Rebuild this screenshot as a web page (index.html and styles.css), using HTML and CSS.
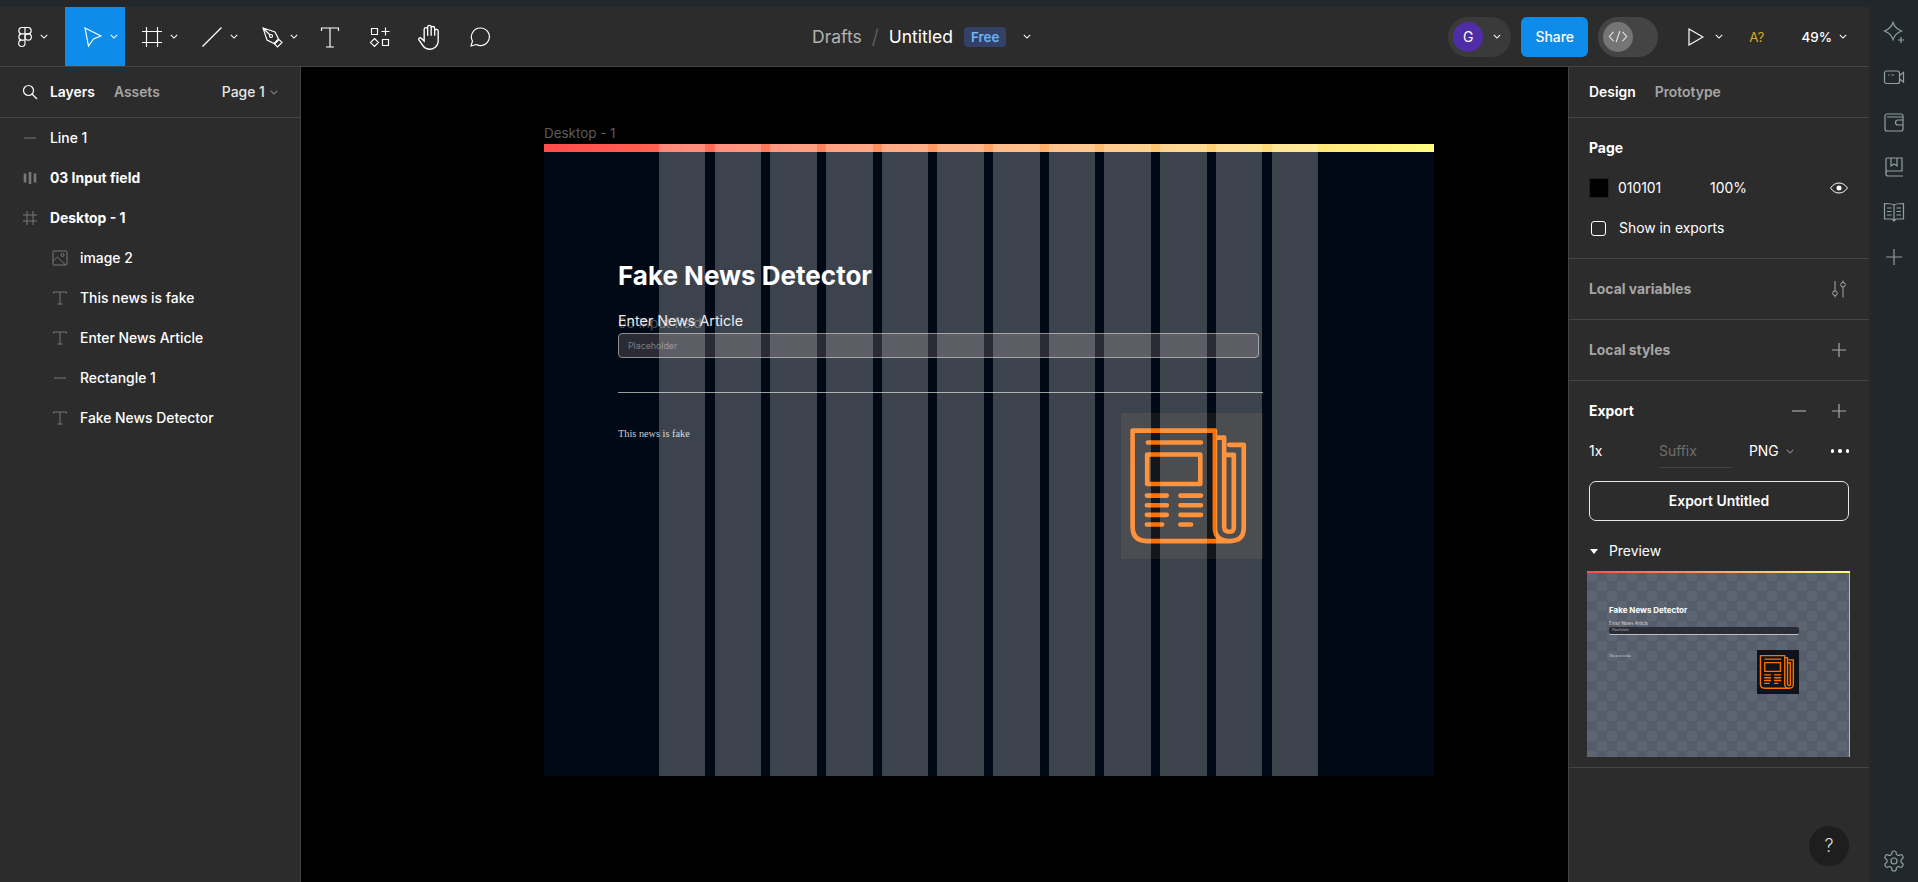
FILE: index.html
```html
<!DOCTYPE html>
<html lang="en">

<head>
    <meta charset="UTF-8">
    <meta name="viewport" content="width=device-width, initial-scale=1.0">
    <title>Untitled - Figma</title>
    <link rel="stylesheet" href="styles.css">
</head>

<body>
    <svg class="sprites" aria-hidden="true">
        <symbol id="chev" viewBox="0 0 10 6"><path d="M1 1l4 4 4-4" fill="none" stroke="currentColor" stroke-width="1.3"/></symbol>
        <symbol id="type" viewBox="0 0 16 16"><path d="M1.5 3.5V2h13v1.5M8 2v12M5.5 14h5" fill="none" stroke="currentColor"/></symbol>
        <symbol id="plus" viewBox="0 0 24 24"><path d="M12 5v14M5 12h14" fill="none" stroke="currentColor" stroke-width="1.2"/></symbol>
        <symbol id="paper" viewBox="62 70 428 438">
            <g fill="none" stroke="#ff7000" stroke-width="14" stroke-linecap="round" stroke-linejoin="round">
                <path d="M97 122H345V415Q345 455 390 455H140Q97 455 97 412zM345 143H373V412Q373 427 388 427T402 412V195H380M388 165H432V415Q432 455 390 455"/>
                <path d="M143 158H303M141 194H301V283H141zM140 318H200M140 347H200M140 376H200M140 405H186M241 318H303M241 347H303M241 376H303M241 405H273"/>
            </g>
        </symbol>
    </svg>

    <div class="app">
        <div class="main">
            <header class="toolbar">
                <div class="tools">
                    <div class="tool logo">
                        <svg class="ico" viewBox="0 0 24 24"><path d="M12 2.500H8.800a3.170 3.170 0 0 0 0 6.330H12zM12 2.500h3.200a3.170 3.170 0 0 1 0 6.330H12zM12 8.830H8.800a3.170 3.170 0 0 0 0 6.330H12zM8.800 15.170H12v3.170a3.170 3.170 0 1 1-3.200-3.170z"/><circle cx="15.200" cy="12" r="3.170"/></svg>
                        <svg class="chev"><use href="#chev"/></svg>
                    </div>
                    <div class="tool active">
                        <svg class="ico" viewBox="0 0 24 24"><path d="M5 3l16 8-7.500 3-5 7z"/></svg>
                        <svg class="chev"><use href="#chev"/></svg>
                    </div>
                    <div class="tool">
                        <svg class="ico" viewBox="0 0 24 24"><path d="M2 6.500h20M2 17.500h20M6.500 2v20M17.500 2v20"/></svg>
                        <svg class="chev"><use href="#chev"/></svg>
                    </div>
                    <div class="tool">
                        <svg class="ico" viewBox="0 0 24 24"><path d="M2.500 21.500l19-19"/></svg>
                        <svg class="chev"><use href="#chev"/></svg>
                    </div>
                    <div class="tool">
                        <svg class="ico" viewBox="0 0 24 24"><path d="M3 3l12 4 3.500 7-4.500 4.500-7-3.500zM3 3l7 7M14.500 19l4.500-4.500 3 3-4.500 4.500z"/><circle cx="11" cy="11" r="1.500"/></svg>
                        <svg class="chev"><use href="#chev"/></svg>
                    </div>
                    <div class="tool plain">
                        <svg class="ico" viewBox="0 0 24 24"><path d="M3.500 6V3h17v3M12 3v19M8 22h8"/></svg>
                    </div>
                    <div class="tool plain">
                        <svg class="ico" viewBox="0 0 24 24"><path d="M3.500 3.500h6v6h-6zM17.500 2.500v8M13.500 6.500h8M6.500 13.500l4 4-4 4-4-4zM14.500 14.500h6v6h-6z"/></svg>
                    </div>
                    <div class="tool plain">
                        <svg class="ico big" viewBox="0 0 24 24"><path d="M7 12V5.500a1.500 1.500 0 0 1 3 0V11M10 11V3.500a1.500 1.500 0 0 1 3 0V11M13 11V4.500a1.500 1.500 0 0 1 3 0V11M16 11V7a1.500 1.500 0 0 1 3 0v9a7 7 0 0 1-7 6.500c-3 0-4.500-1-6-3l-3.500-5c-.8-1 .7-2.500 2-1.500L7 15.500V12"/></svg>
                    </div>
                    <div class="tool plain">
                        <svg class="ico" viewBox="0 0 24 24"><path d="M12.500 3a8.800 8.800 0 1 1-4.200 16.500L3 21l1.500-5A8.800 8.800 0 0 1 12.500 3z"/></svg>
                    </div>
                </div>

                <div class="crumbs">
                    <span class="crumb-dim">Drafts</span>
                    <span class="crumb-sep">/</span>
                    <span class="crumb-file">Untitled</span>
                    <span class="badge">Free</span>
                    <svg class="chev"><use href="#chev"/></svg>
                </div>

                <div class="actions">
                    <div class="pill avatar-pill">
                        <span class="avatar">G</span>
                        <svg class="chev"><use href="#chev"/></svg>
                    </div>
                    <div class="share">Share</div>
                    <div class="pill code-pill">
                        <span class="code-knob">
                            <svg viewBox="0 0 22 14" width="20" height="13"><path d="M6 2L1.500 7 6 12M16 2l4.500 5-4.500 5M13 1L9 13" fill="none" stroke="#e6e6e6" stroke-width="1.200"/></svg>
                        </span>
                    </div>
                    <svg class="play" viewBox="0 0 16 18"><path d="M1 1l14 8-14 8z" fill="none" stroke="#fff" stroke-width="1.200"/></svg>
                    <svg class="chev play-chev"><use href="#chev"/></svg>
                    <span class="missing-font">A?</span>
                    <span class="zoom-level">49%</span>
                    <svg class="chev"><use href="#chev"/></svg>
                </div>
            </header>

            <div class="workspace">
                <aside class="left-panel">
                    <div class="panel-tabs">
                        <svg class="search" viewBox="0 0 16 16"><circle cx="6.500" cy="6.500" r="5"/><path d="M10 10l5 5"/></svg>
                        <span class="tab on">Layers</span>
                        <span class="tab">Assets</span>
                        <span class="page-pick">Page 1 <svg class="chev dim"><use href="#chev"/></svg></span>
                    </div>
                    <ul class="layers">
                        <li class="layer">
                            <svg class="layer-ico" viewBox="0 0 16 16"><path d="M2 8h12"/></svg>
                            Line 1
                        </li>
                        <li class="layer strong">
                            <svg class="layer-ico" viewBox="0 0 16 16"><path d="M3 3.500v9M8 2v12M13 3.500v9" stroke-width="2.600"/></svg>
                            03 Input field
                        </li>
                        <li class="layer strong">
                            <svg class="layer-ico" viewBox="0 0 16 16"><path d="M1 5h14M1 11h14M5 1v14M11 1v14"/></svg>
                            Desktop - 1
                        </li>
                        <li class="layer nested">
                            <svg class="layer-ico" viewBox="0 0 16 16"><rect x="1" y="1" width="14" height="14" rx="1"/><circle cx="10.500" cy="5" r="1.500"/><path d="M1 11l4.500-4 8 8"/></svg>
                            image 2
                        </li>
                        <li class="layer nested">
                            <svg class="layer-ico"><use href="#type"/></svg>
                            This news is fake
                        </li>
                        <li class="layer nested">
                            <svg class="layer-ico"><use href="#type"/></svg>
                            Enter News Article
                        </li>
                        <li class="layer nested">
                            <svg class="layer-ico" viewBox="0 0 16 16"><path d="M2 8h12"/></svg>
                            Rectangle 1
                        </li>
                        <li class="layer nested">
                            <svg class="layer-ico"><use href="#type"/></svg>
                            Fake News Detector
                        </li>
                    </ul>
                </aside>

                <main class="canvas">
                    <div class="frame-label">Desktop - 1</div>
                    <section class="frame">
                        <div class="deco-bar"></div>
                        <h1 class="frame-title">Fake News Detector</h1>
                        <div class="frame-label-text">Enter News Article</div>
                        <div class="ghost-label">03 Input field</div>
                        <div class="frame-input">Placeholder</div>
                        <div class="frame-rule"></div>
                        <div class="frame-result">This news is fake</div>
                        <div class="frame-image"><svg class="paper"><use href="#paper"/></svg></div>
                        <div class="layout-grid">
                            <i></i><i></i><i></i><i></i><i></i><i></i><i></i><i></i><i></i><i></i><i></i><i></i>
                        </div>
                    </section>
                </main>

                <aside class="right-panel">
                    <div class="panel-tabs design-tabs">
                        <span class="tab on">Design</span>
                        <span class="tab">Prototype</span>
                    </div>

                    <section class="block page-block">
                        <div class="row heading">Page</div>
                        <div class="row">
                            <span class="swatch"></span>
                            <span class="hex">010101</span>
                            <span>100%</span>
                            <svg class="row-ico" viewBox="0 0 24 24"><path d="M3.500 12c2.500-3.500 5.500-5 8.500-5s6 1.500 8.500 5c-2.500 3.500-5.500 5-8.500 5s-6-1.500-8.500-5z" stroke="#fff"/><circle cx="12" cy="12" r="2.500" fill="#fff"/></svg>
                        </div>
                        <div class="row">
                            <span class="checkbox"></span>
                            <span>Show in exports</span>
                        </div>
                    </section>

                    <section class="block tall heading muted">
                        Local variables
                        <svg class="row-ico" viewBox="0 0 24 24"><path d="M8 4v10M8 18.500v2M16 3.500v2M16 10v10.500" stroke="#a8a8a8"/><circle cx="8" cy="16.200" r="2.300" stroke="#a8a8a8"/><circle cx="16" cy="7.700" r="2.300" stroke="#a8a8a8"/></svg>
                    </section>

                    <section class="block tall heading muted">
                        Local styles
                        <svg class="row-ico dim-ico"><use href="#plus"/></svg>
                    </section>

                    <section class="block export-block">
                        <div class="row heading">
                            Export
                            <svg class="row-ico minus" viewBox="0 0 24 24"><path d="M5 12h14" stroke="#a8a8a8" stroke-width="1.200"/></svg>
                            <svg class="row-ico plus-last dim-ico"><use href="#plus"/></svg>
                        </div>
                        <div class="row">
                            <span class="scale">1x</span>
                            <span class="suffix">Suffix</span>
                            <span class="format">PNG <svg class="chev dim"><use href="#chev"/></svg></span>
                            <span class="dots"><i></i><i></i><i></i></span>
                        </div>
                        <div class="export-btn">Export Untitled</div>
                        <div class="row preview-head">
                            <span class="caret"></span>
                            Preview
                        </div>
                        <div class="preview">
                            <div class="mini-bar"></div>
                            <div class="mini-title">Fake News Detector</div>
                            <div class="mini-label">Enter News Article</div>
                            <div class="mini-input">Placeholder</div>
                            <div class="mini-body">
                                <span class="mini-result">This news is fake</span>
                                <span class="mini-image"><svg class="paper"><use href="#paper"/></svg></span>
                            </div>
                        </div>
                    </section>

                    <div class="help">?</div>
                </aside>
            </div>
        </div>

        <nav class="rail">
            <svg class="rail-ico" viewBox="0 0 24 24"><path d="M11 2.500Q13 8.500 19.500 11 13 13.500 11 19.500 9 13.500 2.500 11 9 8.500 11 2.500zM19 17v6M16 20h6"/></svg>
            <svg class="rail-ico" viewBox="0 0 24 24"><rect x="2.500" y="6" width="15" height="12.500" rx="2"/><path d="M17.500 10.500l4-3v9.500l-4-3M6 10h1.500M9.500 10h2.500"/></svg>
            <svg class="rail-ico" viewBox="0 0 24 24"><path d="M21 7V6a2 2 0 0 0-2-2H5a2 2 0 0 0-2 2v13a2 2 0 0 0 2 2h14a2 2 0 0 0 2-2V7H5M21 10h-5a2.500 2.500 0 0 0 0 5h5"/></svg>
            <svg class="rail-ico" viewBox="0 0 24 24"><path d="M4 19V4a1 1 0 0 1 1-1h15v13H6a2 2 0 0 0-2 3 2 2 0 0 0 2 2h15M9 3v8l3-2 3 2V3"/></svg>
            <svg class="rail-ico" viewBox="0 0 24 24"><path d="M12 5C10 3.500 5 3.500 2.500 3.500V19H10l2 2 2-2h7.500V3.500C19 3.500 14 3.500 12 5zM12 5v15M5 8h4.500M5 11.500h4.500M5 15h4.500M14.500 8H19M14.500 11.500H19M14.500 15H19"/></svg>
            <svg class="rail-ico" viewBox="0 0 24 24"><path d="M12 4v16M4 12h16"/></svg>
            <svg class="rail-ico gear" viewBox="0 0 24 24"><path d="M12.220 2h-.44a2 2 0 0 0-2 2v.18a2 2 0 0 1-1 1.730l-.43.25a2 2 0 0 1-2 0l-.15-.08a2 2 0 0 0-2.730.73l-.22.38a2 2 0 0 0 .73 2.730l.15.1a2 2 0 0 1 1 1.720v.51a2 2 0 0 1-1 1.740l-.15.09a2 2 0 0 0-.73 2.730l.22.38a2 2 0 0 0 2.730.73l.15-.08a2 2 0 0 1 2 0l.43.25a2 2 0 0 1 1 1.730V20a2 2 0 0 0 2 2h.44a2 2 0 0 0 2-2v-.18a2 2 0 0 1 1-1.730l.43-.25a2 2 0 0 1 2 0l.15.08a2 2 0 0 0 2.730-.73l.22-.39a2 2 0 0 0-.73-2.730l-.15-.08a2 2 0 0 1-1-1.740v-.5a2 2 0 0 1 1-1.740l.15-.09a2 2 0 0 0 .73-2.730l-.22-.38a2 2 0 0 0-2.730-.73l-.15.08a2 2 0 0 1-2 0l-.43-.25a2 2 0 0 1-1-1.730V4a2 2 0 0 0-2-2z"/><circle cx="12" cy="12" r="3"/></svg>
        </nav>
    </div>
</body>

</html>
```

FILE: styles.css
```css
* {
    box-sizing: border-box;
}

html,
body {
    height: 100%;
}

body {
    margin: 0;
    overflow: hidden;
    background: #22272b;
    color: #fff;
    font-family: Inter, "Liberation Sans", sans-serif;
    font-size: 13.9px;
}

.sprites {
    position: absolute;
    width: 0;
    height: 0;
}

.app {
    display: flex;
    height: 882px;
}

.main {
    display: flex;
    flex-direction: column;
    width: 1869px;
    padding-top: 7px;
}

/* toolbar */

.toolbar {
    display: flex;
    align-items: center;
    flex: none;
    height: 60px;
    background: #2c2c2c;
    border-bottom: 1px solid #444;
}

.tools {
    display: flex;
    align-self: stretch;
    width: 505px;
    flex: none;
}

.tool {
    display: flex;
    align-items: center;
    width: 60px;
    padding-left: 15px;
    gap: 6px;
}

.tool.logo {
    width: 65px;
    padding-left: 13px;
    gap: 3px;
}

.tool.active {
    background: #0d8ce9;
}

.tool.plain {
    width: 50px;
    padding-left: 13px;
}

.ico {
    width: 24px;
    height: 24px;
    flex: none;
    fill: none;
    stroke: #fff;
    stroke-width: 1.15;
}

.ico.big {
    width: 28px;
    height: 28px;
    margin-left: -2px;
}

.chev {
    width: 8px;
    height: 5px;
    flex: none;
    color: #fff;
}

.chev.dim {
    color: #8a8a8a;
}

.crumbs {
    display: flex;
    align-items: center;
    margin-left: 307px;
    font-size: 17.5px;
}

.crumb-dim {
    color: #b3b3b3;
}

.crumb-sep {
    margin: 0 10px;
    color: #666;
    font-size: 20px;
    font-weight: 300;
}

.badge {
    margin: 0 17px 0 11px;
    padding: 0 7px;
    height: 20px;
    line-height: 20px;
    border-radius: 4px;
    background: #334166;
    color: #6db6f5;
    font-size: 13.4px;
    font-weight: 600;
}

.actions {
    display: flex;
    align-items: center;
    margin-left: auto;
    padding-right: 22px;
}

.pill {
    display: flex;
    align-items: center;
    height: 40px;
    border-radius: 20px;
}

.avatar-pill {
    width: 63px;
    padding-left: 5px;
    gap: 10px;
    background: #3a3a3a;
}

.avatar {
    width: 30px;
    height: 30px;
    border-radius: 50%;
    background: #4f2da7;
    font-size: 14px;
    line-height: 30px;
    text-align: center;
}

.share {
    width: 67px;
    height: 40px;
    margin: 0 10px;
    border-radius: 6px;
    background: #0d8ce9;
    font-weight: 500;
    line-height: 40px;
    text-align: center;
}

.code-pill {
    width: 60px;
    padding-left: 5px;
    background: #444;
}

.code-knob {
    display: flex;
    align-items: center;
    justify-content: center;
    width: 30px;
    height: 30px;
    border-radius: 50%;
    background: #757575;
}

.play {
    width: 16px;
    height: 18px;
    margin-left: 30px;
}

.play-chev {
    margin-left: 11px;
}

.missing-font {
    margin-left: 26px;
    color: #dba81c;
    font-size: 13.4px;
}

.zoom-level {
    margin: 0 7px 0 37px;
    font-size: 13.4px;
    font-weight: 500;
}

/* panels */

.workspace {
    display: flex;
    flex: 1;
    min-height: 0;
}

.left-panel {
    width: 301px;
    flex: none;
    background: #2c2c2c;
    border-right: 1px solid #444;
}

.right-panel {
    position: relative;
    width: 301px;
    flex: none;
    background: #2c2c2c;
    border-left: 1px solid #444;
}

.panel-tabs {
    display: flex;
    align-items: center;
    height: 51px;
    padding-left: 22px;
    border-bottom: 1px solid #444;
}

.design-tabs {
    padding-left: 20px;
}

.search {
    width: 16px;
    height: 16px;
    margin-right: 12px;
    fill: none;
    stroke: #fff;
    stroke-width: 1.2;
}

.tab {
    margin-right: 19px;
    color: #a6a6a6;
    font-weight: 600;
}

.tab.on {
    color: #fff;
}

.page-pick {
    display: flex;
    align-items: center;
    gap: 5px;
    margin-left: 43px;
    color: #e6e6e6;
    font-weight: 500;
}

.layers {
    margin: 0;
    padding: 0;
    list-style: none;
}

.layer {
    display: flex;
    align-items: center;
    height: 40px;
    padding-left: 22px;
    gap: 12px;
    font-weight: 500;
}

.layer.strong {
    font-weight: 700;
}

.layer.nested {
    padding-left: 52px;
}

.layer-ico {
    width: 16px;
    height: 16px;
    flex: none;
    color: #777;
    fill: none;
    stroke: #777;
}

/* canvas */

.canvas {
    position: relative;
    flex: 1;
    background: #000;
}

.frame-label {
    position: absolute;
    left: 243px;
    top: 58px;
    color: #5c5c5c;
    font-size: 13.4px;
}

.frame {
    position: absolute;
    left: 243px;
    top: 77px;
    width: 890px;
    height: 632px;
    padding-left: 74px;
    background: #010916;
}

.deco-bar {
    height: 8px;
    margin-left: -74px;
    background: linear-gradient(90deg, #ff4b4b, #fffd80);
}

.frame-title {
    margin: 108px 0 0;
    font-size: 26px;
    font-weight: 700;
    line-height: 32px;
}

.frame-label-text {
    margin-top: 19px;
    color: #e8e8e8;
    font-size: 14.3px;
    line-height: 20px;
}

.ghost-label {
    position: absolute;
    left: 74px;
    top: 171px;
    color: rgba(255, 255, 255, 0.3);
    font-size: 13.4px;
}

.frame-input {
    width: 641px;
    height: 25px;
    margin-top: 2px;
    padding-left: 9px;
    border: 1px solid #8c8c8c;
    border-radius: 4px;
    background: #2a2b35;
    color: #7c7c80;
    font-size: 8.8px;
    line-height: 23px;
}

.frame-rule {
    width: 645px;
    height: 1px;
    margin-top: 34px;
    background: #9b9b9b;
}

.frame-result {
    margin-top: 33px;
    color: #d0d0d0;
    font-family: "Liberation Serif", serif;
    font-size: 10.3px;
    line-height: 16px;
}

.frame-image {
    position: absolute;
    left: 577px;
    top: 269px;
    width: 142px;
    height: 146px;
    background: #14161b;
}

.paper {
    display: block;
    width: 100%;
    height: 100%;
}

.layout-grid {
    position: absolute;
    left: 115px;
    top: 0;
    display: grid;
    grid-template-columns: repeat(12, 1fr);
    column-gap: 9.2px;
    width: 659px;
    height: 100%;
}

.layout-grid i {
    background: rgba(255, 255, 255, 0.24);
}

/* right panel */

.block {
    padding: 10px 18px 10px 20px;
    border-bottom: 1px solid #444;
}

.block.tall {
    display: flex;
    align-items: center;
    justify-content: space-between;
    height: 61px;
    padding-top: 0;
    padding-bottom: 0;
}

.heading {
    font-weight: 700;
}

.heading.muted {
    color: #a6a6a6;
}

.row {
    display: flex;
    align-items: center;
    height: 40px;
}

.row-ico {
    width: 24px;
    height: 24px;
    flex: none;
    margin-left: auto;
    fill: none;
}

.row-ico.minus + .plus-last {
    margin-left: 16px;
}

.dim-ico {
    color: #a8a8a8;
}

.swatch {
    width: 20px;
    height: 20px;
    margin-right: 9px;
    background: #010101;
    border: 1px solid #222;
}

.hex {
    width: 92px;
}

.checkbox {
    width: 15px;
    height: 15px;
    margin: 0 13px 0 2px;
    border: 1px solid #fff;
    border-radius: 3px;
}

.scale {
    width: 70px;
}

.suffix {
    width: 72px;
    height: 28px;
    margin-top: 6px;
    color: #6e6e6e;
    border-bottom: 1px solid #444;
    line-height: 22px;
}

.format {
    display: flex;
    align-items: center;
    gap: 7px;
    margin-left: 18px;
}

.dots {
    display: flex;
    gap: 4px;
    margin: 0 2px 0 auto;
}

.dots i {
    width: 3.5px;
    height: 3.5px;
    border-radius: 50%;
    background: #fff;
}

.export-btn {
    width: 260px;
    height: 40px;
    margin-top: 10px;
    border: 1px solid #e6e6e6;
    border-radius: 7px;
    font-weight: 600;
    line-height: 38px;
    text-align: center;
}

.preview-head {
    margin-top: 10px;
    gap: 11px;
}

.caret {
    width: 0;
    height: 0;
    margin-left: 1px;
    border-left: 4px solid transparent;
    border-right: 4px solid transparent;
    border-top: 5px solid #fff;
}

.preview {
    position: relative;
    width: 263px;
    height: 186px;
    margin-left: -2px;
    padding-left: 22px;
    border-right: 1px solid #b8bcc4;
    background-color: #5d6472;
    background-image: conic-gradient(#565d6a 25%, transparent 0 50%, #565d6a 0 75%, transparent 0);
    background-size: 20px 20px;
}

.mini-bar {
    height: 2px;
    margin-left: -22px;
    margin-right: -1px;
    background: linear-gradient(90deg, #ff4b4b, #fffd80);
}

.mini-title {
    margin-top: 32px;
    font-size: 8px;
    font-weight: 700;
    line-height: 10px;
}

.mini-label {
    margin-top: 6px;
    color: #d8d8d8;
    font-size: 4.5px;
    line-height: 6px;
}

.mini-input {
    width: 190px;
    height: 8px;
    padding-left: 3px;
    border-bottom: 1px solid #c0c0c0;
    border-radius: 2px;
    background: #2a2b35;
    color: #aaa;
    font-size: 3px;
    line-height: 7px;
}

.mini-body {
    display: flex;
    justify-content: space-between;
    width: 190px;
    margin-top: 15px;
}

.mini-result {
    margin-top: 4px;
    color: #ddd;
    font-family: "Liberation Serif", serif;
    font-size: 3.2px;
}

.mini-image {
    width: 42px;
    height: 44px;
    background: #0f1218;
}

.help {
    position: absolute;
    left: 240px;
    top: 759px;
    width: 40px;
    height: 40px;
    border-radius: 50%;
    background: #1e1e1e;
    color: #ddd;
    font-size: 18px;
    font-weight: 300;
    line-height: 40px;
    text-align: center;
}

/* right rail */

.rail {
    display: flex;
    flex-direction: column;
    align-items: center;
    flex: 1;
    padding: 20px 0 9px;
    gap: 21px;
}

.rail-ico {
    width: 24px;
    height: 24px;
    flex: none;
    fill: none;
    stroke: #8fa0a6;
    stroke-width: 1.2;
}

.rail-ico.gear {
    margin-top: auto;
}
```
